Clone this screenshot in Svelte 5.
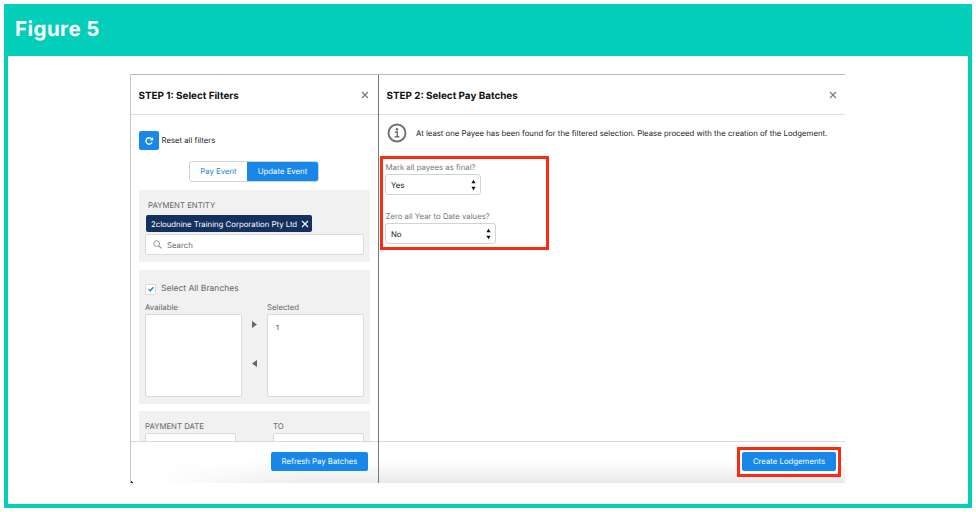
<script>
	let eventType = $state('update');
	let allBranches = $state(true);
	let branches = ['1'];
</script>

{#snippet cross(size)}
	<svg width={size} height={size} viewBox="0 0 8 8" fill="none" stroke="currentColor" aria-hidden="true">
		<path d="M1 1l6 6M7 1l-6 6" stroke-width="1.1" />
	</svg>
{/snippet}

{#snippet arrows()}
	<svg class="arrows" width="5" height="12" viewBox="0 0 5 12" aria-hidden="true">
		<path d="M2.5 0.7l2.1 3.5H.4zM2.5 11.3l2.1-3.5H.4z" fill="#111" />
	</svg>
{/snippet}

<figure class="figure">
	<figcaption>Figure 5</figcaption>

	<div class="screen">
		<section class="panel filters">
			<header class="panel-header">
				<h2>STEP 1: Select Filters</h2>
				<button class="close" aria-label="Close">{@render cross(8)}</button>
			</header>

			<div class="panel-body">
				<div class="reset">
					<button class="reset-button" aria-label="Reset">
						<svg width="10" height="10" viewBox="0 0 10 10" fill="none" aria-hidden="true">
							<path d="M7.7 3A3.2 3.2 0 1 0 8.1 6.2" stroke="#fff" stroke-width="1.3" />
							<path d="M9.1.9v3.7H5.4z" fill="#fff" />
						</svg>
					</button>
					<span>Reset all filters</span>
				</div>

				<div class="toggle">
					<button class:active={eventType === 'pay'} onclick={() => (eventType = 'pay')}>Pay Event</button>
					<button class:active={eventType === 'update'} onclick={() => (eventType = 'update')}>Update Event</button>
				</div>

				<div class="card entity">
					<div class="caption">PAYMENT ENTITY</div>
					<div class="pill"><span>2cloudnine Training Corporation Pty Ltd</span>{@render cross(8)}</div>
					<div class="search">
						<svg width="9" height="9" viewBox="0 0 9 9" fill="none" stroke="#858585" aria-hidden="true">
							<circle cx="3.6" cy="3.6" r="2.9" stroke-width=".9" />
							<path d="M5.8 5.8L8.4 8.4" stroke-width="1.1" />
						</svg>
						<span>Search</span>
					</div>
				</div>

				<div class="card branches">
					<button class="check" onclick={() => (allBranches = !allBranches)}>
						<span class="box">
							{#if allBranches}
								<svg width="6" height="6" viewBox="0 0 6 6" fill="none" aria-hidden="true">
									<path d="M.6 3.2L2.2 4.7 5.4 1.2" stroke="#1681d8" stroke-width="1.4" />
								</svg>
							{/if}
						</span>
						<span class="check-label">Select All Branches</span>
					</button>
					<div class="picker">
						<div class="list">
							<span>Available</span>
							<div class="options"></div>
						</div>
						<div class="movers">
							<svg width="5" height="7" viewBox="0 0 5 7" aria-hidden="true"><path d="M0 0l5 3.5L0 7z" fill="#666" /></svg>
							<svg width="5" height="7" viewBox="0 0 5 7" aria-hidden="true"><path d="M5 0L0 3.5 5 7z" fill="#666" /></svg>
						</div>
						<div class="list">
							<span>Selected</span>
							<div class="options">
								{#each branches as branch}
									<div>{branch}</div>
								{/each}
							</div>
						</div>
					</div>
				</div>

				<div class="card dates">
					<div class="date">
						<span>PAYMENT DATE</span>
						<div class="date-input"></div>
					</div>
					<div class="date">
						<span>TO</span>
						<div class="date-input"></div>
					</div>
				</div>
			</div>

			<footer class="panel-footer">
				<button class="primary refresh">Refresh Pay Batches</button>
			</footer>
		</section>

		<section class="panel batches">
			<header class="panel-header">
				<h2>STEP 2: Select Pay Batches</h2>
				<button class="close" aria-label="Close">{@render cross(8)}</button>
			</header>

			<div class="panel-body">
				<div class="notice">
					<svg width="20" height="20" viewBox="0 0 20 20" fill="none" aria-hidden="true">
						<circle cx="10" cy="10" r="8.5" stroke="#707070" stroke-width="1.9" />
						<circle cx="10" cy="6.3" r="1.3" fill="#707070" />
						<path d="M8 9h2.3v4.6M7.8 13.8h4.5" stroke="#707070" stroke-width="1.4" />
					</svg>
					<span>At least one Payee has been found for the filtered selection. Please proceed with the creation of the Lodgement.</span>
				</div>

				<div class="highlight options-highlight">
					<div class="label">Mark all payees as final?</div>
					<div class="select yes"><span>Yes</span>{@render arrows()}</div>
					<div class="label">Zero all Year to Date values?</div>
					<div class="select no"><span>No</span>{@render arrows()}</div>
				</div>
			</div>

			<footer class="panel-footer">
				<div class="highlight button-highlight">
					<button class="primary create">Create Lodgements</button>
				</div>
			</footer>
		</section>
	</div>
</figure>

<style>
	:global(body) {
		margin: 0;
		background: #fff;
		overflow: hidden;
	}

	.figure {
		box-sizing: border-box;
		width: 968px;
		height: 504px;
		margin: 4px;
		border: 4px solid #02ceba;
		background: #fff;
		font-family: Inter, 'Liberation Sans', sans-serif;
		font-size: 7.78px;
		text-rendering: geometricPrecision;
		color: #1c1c1c;
	}

	.figure * {
		box-sizing: border-box;
	}

	figcaption {
		height: 48px;
		padding-left: 7px;
		background: #02ceba;
		color: #fff;
		font-size: 20.5px;
		font-weight: 700;
		line-height: 41px;
		letter-spacing: 0.45px;
	}

	button {
		margin: 0;
		padding: 0;
		border: 0;
		background: none;
		color: inherit;
		font: inherit;
		text-rendering: inherit;
		letter-spacing: inherit;
		white-space: nowrap;
		cursor: pointer;
	}

	svg {
		display: block;
		flex: none;
	}

	.screen {
		display: flex;
		width: 715px;
		height: 409px;
		margin: 18px 0 0 122px;
		border-top: 1px solid #b5b8bb;
		border-left: 1px solid #c8c8c8;
		white-space: nowrap;
	}

	.panel {
		display: flex;
		flex-direction: column;
	}

	.filters {
		width: 248px;
		border-right: 1px solid #777;
	}

	.batches {
		flex: 1;
	}

	.panel-header {
		display: flex;
		align-items: center;
		justify-content: space-between;
		height: 40px;
		padding: 0 9px 0 7.5px;
		border-bottom: 1px solid #dedede;
	}

	.batches .panel-header {
		padding-right: 8px;
	}

	h2 {
		margin: 0;
		padding-top: 3px;
		color: #111;
		font-size: 9.85px;
		font-weight: 700;
		line-height: 12px;
	}

	.close {
		color: #777;
	}

	.panel-body {
		height: 326px;
		overflow: hidden;
	}

	.filters .panel-body {
		padding: 16px 8px 0;
	}

	.reset {
		display: flex;
		align-items: center;
		gap: 2.5px;
		height: 19px;
		line-height: 10px;
	}

	.reset span {
		padding-bottom: 2px;
	}

	.reset-button {
		display: flex;
		align-items: center;
		justify-content: center;
		width: 20px;
		height: 19px;
		border-radius: 2px;
		background: #1788ea;
	}

	.toggle {
		display: flex;
		width: 130px;
		height: 21px;
		margin: 11px 0 8px 50px;
		border: 1px solid #d3d3d3;
		border-radius: 3px;
		overflow: hidden;
	}

	.toggle button {
		width: 57px;
		padding-bottom: 1px;
		color: #2584d0;
		line-height: 18px;
	}

	.toggle button + button {
		width: 71px;
	}

	.toggle button.active {
		background: #1788ea;
		color: #fff;
	}

	.card {
		background: #f1f1f1;
		color: #666;
	}

	.entity {
		height: 72px;
		margin-bottom: 8px;
		padding: 8px 7px 0;
	}

	.caption {
		height: 17px;
		padding-left: 2px;
		line-height: 14px;
	}

	.pill {
		display: flex;
		align-items: center;
		justify-content: space-between;
		width: 166px;
		height: 17px;
		padding: 0 3px 0 5px;
		border-radius: 2px;
		background: #14305f;
		color: #fff;
	}

	.search {
		display: flex;
		align-items: center;
		gap: 5px;
		height: 21px;
		margin: 2px -1px 0;
		padding-left: 7px;
		border: 1px solid #dadada;
		border-radius: 2px;
		background: #fff;
	}

	.branches {
		height: 134px;
		margin-bottom: 7px;
		padding: 13px 6px 0;
	}

	.check {
		display: flex;
		align-items: center;
		gap: 5px;
		height: 12px;
		font-size: 8.5px;
	}

	.check-label {
		padding-top: 1.5px;
		line-height: 11px;
	}

	.box {
		display: flex;
		align-items: center;
		justify-content: center;
		width: 11px;
		height: 11px;
		border: 1px solid #d8d8d8;
		border-radius: 1px;
		background: #fff;
	}

	.picker {
		display: flex;
		justify-content: space-between;
		padding-top: 5px;
	}

	.list {
		width: 97px;
		line-height: 14px;
	}

	.list > span {
		display: block;
		height: 14px;
	}

	.options {
		height: 83px;
		padding: 6px 8px;
		border: 1px solid #dadada;
		border-radius: 2px;
		background: #fff;
		color: #333;
		font-size: 7px;
	}

	.movers {
		display: flex;
		flex-direction: column;
		gap: 32px;
		padding-top: 21px;
	}

	.dates {
		display: flex;
		justify-content: space-between;
		height: 60px;
		padding: 8px 6px 0;
	}

	.date {
		width: 91px;
	}

	.date > span {
		display: block;
		height: 14px;
		line-height: 14px;
	}

	.date-input {
		height: 21px;
		border: 1px solid #dadada;
		border-radius: 2px;
		background: #fff;
	}

	.panel-footer {
		display: flex;
		justify-content: flex-end;
		height: 42px;
		border-top: 1px solid #d9d9d9;
		background: linear-gradient(#fff 45%, #e9e9e9);
	}

	/* the shade fades out to the left, down to the dark window corner */
	.filters .panel-footer {
		padding: 10px 10px 0 0;
		background:
			linear-gradient(45deg, #1b1b4b 1.5px, rgba(255, 255, 255, 0) 2px),
			linear-gradient(90deg, #fff 10%, rgba(255, 255, 255, 0) 70%),
			linear-gradient(#fff 45%, #ececec);
	}

	.batches .panel-footer {
		padding: 5px 4px 0 0;
	}

	.primary {
		border-radius: 2px;
		background: #1788ea;
		color: #fff;
		line-height: 19px;
		text-align: center;
	}

	.refresh {
		width: 97px;
		height: 19px;
	}

	.create {
		display: block;
		width: 94px;
		height: 19px;
	}

	.highlight {
		border: 3px solid #fb2a13;
	}

	.button-highlight {
		width: 104px;
		height: 30px;
		padding: 2px;
		background: #fff;
	}

	.notice {
		display: flex;
		align-items: center;
		gap: 9px;
		height: 36px;
		padding-left: 8px;
	}

	.options-highlight {
		width: 169px;
		height: 94px;
		margin: 5px 0 0 1px;
		padding: 1px 2px 0;
	}

	.label {
		height: 14px;
		padding-left: 0.5px;
		color: #777;
		line-height: 14px;
	}

	.select {
		display: flex;
		align-items: center;
		justify-content: space-between;
		height: 21px;
		padding: 0 4px 0 5px;
		border: 1px solid #d2d2d2;
		border-radius: 3px;
		background: #fff;
		color: #111;
	}

	.yes {
		width: 96px;
		margin-bottom: 14px;
	}

	.no {
		width: 111px;
	}
</style>
